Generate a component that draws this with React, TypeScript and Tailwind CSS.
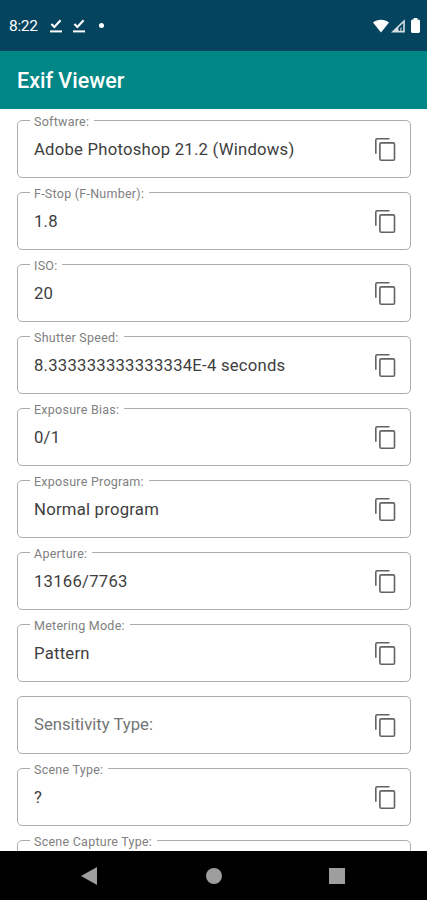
import React from 'react';

interface ExifField {
  label: string;
  value?: string;
}

const FIELDS: ExifField[] = [
  { label: 'Software:', value: 'Adobe Photoshop 21.2 (Windows)' },
  { label: 'F-Stop (F-Number):', value: '1.8' },
  { label: 'ISO:', value: '20' },
  { label: 'Shutter Speed:', value: '8.333333333333334E-4 seconds' },
  { label: 'Exposure Bias:', value: '0/1' },
  { label: 'Exposure Program:', value: 'Normal program' },
  { label: 'Aperture:', value: '13166/7763' },
  { label: 'Metering Mode:', value: 'Pattern' },
  { label: 'Sensitivity Type:' },
  { label: 'Scene Type:', value: '?' },
  { label: 'Scene Capture Type:', value: '' },
];

function CopyIcon() {
  return (
    <svg viewBox="0 0 24 26" className="h-[26px] w-6" fill="none" stroke="#626262" strokeWidth="1.6">
      <path d="M2.8 17.8V4.3Q2.8 2.8 4.3 2.8H16.5" />
      <rect x="6.9" y="6.9" width="14.6" height="17.3" rx="1.3" />
    </svg>
  );
}

function DoneIcon() {
  return (
    <svg viewBox="0 0 12 14" className="h-3.5 w-3" fill="none" stroke="#fff">
      <path d="M1.4 5.1 4.4 8 10.6 1.3" strokeWidth="2.1" />
      <path d="M0 12.4h12" strokeWidth="2" />
    </svg>
  );
}

function StatusBar() {
  return (
    <div className="flex h-[51px] flex-shrink-0 items-center bg-[#05445e] pl-[9px] pr-[7px] text-white">
      <span className="w-[41px] pt-[3px] text-[15.5px] leading-none tracking-[-0.3px]">8:22</span>
      <div className="flex items-center gap-[11px]">
        <DoneIcon />
        <DoneIcon />
      </div>
      <span className="ml-[14px] size-[5px] rounded-full bg-white" />
      <div className="ml-auto flex items-center">
        <svg viewBox="0 0 16 14" className="h-3.5 w-4" fill="#fff">
          <path d="M0 3.4C4.6-.2 11.4-.2 16 3.4L8 13.6z" />
        </svg>
        <svg viewBox="0 0 14 14" className="ml-0.5 h-3.5 w-3.5">
          <path d="M0 13.6 13.8.3v13.3z" fill="#d5dfe4" />
          <path d="M7.4 11.8V8.6l4.8-4.6v7.8z" fill="#05445e" />
          <path d="M9 11.8V9.4l1.6-1.6v4z" fill="#9fb4be" />
        </svg>
        <svg viewBox="0 0 9 15" className="ml-[6px] h-[15px] w-[9px]" fill="#fff">
          <path d="M2.6 0h3.8v1.4H7.6Q9 1.6 9 3v10.6Q9 15 7.6 15H1.4Q0 15 0 13.6V3q0-1.4 1.4-1.6h1.2z" />
        </svg>
      </div>
    </div>
  );
}

function OutlinedField({ label, value }: ExifField) {
  const filled = value !== undefined;
  return (
    <div className="relative flex h-[58px] flex-shrink-0 items-center justify-between rounded-[5px] border border-[#acacac] pl-4 pr-[13px]">
      {/* Floating label sits over the outline and notches it. */}
      {filled && (
        <span className="absolute -top-[7px] left-3 bg-white pl-1 pr-[5px] text-[12.5px] leading-4 tracking-[0.25px] text-[#808080]">
          {label}
        </span>
      )}
      {filled ? (
        <span className="pt-0.5 text-[16.7px] tracking-[0.23px] text-[#3e3e3e]">{value}</span>
      ) : (
        <span className="text-[16.7px] text-[#757575]">{label}</span>
      )}
      <CopyIcon />
    </div>
  );
}

function NavBar() {
  return (
    <div className="flex h-[49px] flex-shrink-0 items-center justify-between bg-black pl-[81px] pr-[82px]">
      <svg viewBox="0 0 16 18" className="h-[18px] w-4" fill="#9e9e9e">
        <path d="M0 9 16 0v18z" />
      </svg>
      <span className="ml-px size-4 rounded-full bg-[#9e9e9e]" />
      <span className="size-4 bg-[#9e9e9e]" />
    </div>
  );
}

export default function App() {
  return (
    <div className="flex h-[900px] w-[427px] flex-col overflow-hidden bg-white font-['Roboto',sans-serif]">
      <StatusBar />
      <header className="flex h-[58px] flex-shrink-0 items-center bg-[#008786] pl-[17px] pt-[3px]">
        <h1 className="text-[21.5px] font-medium text-white">Exif Viewer</h1>
      </header>
      <main className="flex min-h-0 flex-1 flex-col gap-3.5 overflow-hidden pl-[17px] pr-4 pt-[11px]">
        {FIELDS.map((f) => (
          <OutlinedField key={f.label} {...f} />
        ))}
      </main>
      <NavBar />
    </div>
  );
}
